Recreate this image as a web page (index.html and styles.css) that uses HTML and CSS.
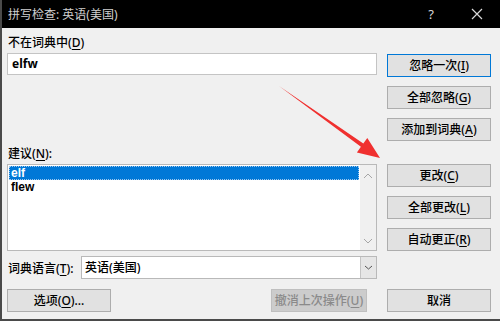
FILE: index.html
```html
<!DOCTYPE html>
<html lang="zh-CN">
<head>
  <meta charset="UTF-8">
  <title>拼写检查</title>
  <link rel="stylesheet" href="styles.css">
</head>
<body>
  <div class="window">
    <div class="titlebar">
      <span class="title">拼写检查: 英语(美国)</span>
      <span class="title-btn help">?</span>
      <span class="title-btn close">
        <svg width="12" height="12" viewBox="0 0 12 12"><path d="M1 1L11 11M11 1L1 11" stroke="#d8d8d8" stroke-width="1.2"/></svg>
      </span>
    </div>

    <div class="dialog">
      <div class="content">
        <div class="left">
          <div class="field-label">不在词典中(<u>D</u>)</div>
          <div class="textbox">elfw</div>

          <div class="field-label suggest-label">建议(<u>N</u>):</div>
          <div class="listbox">
            <div class="items">
              <div class="item selected">elf</div>
              <div class="item">flew</div>
            </div>
            <div class="scrollbar">
              <svg width="10" height="6" viewBox="0 0 10 6"><path d="M1 5L5 1L9 5" fill="none" stroke="#a6a6a6"/></svg>
              <svg width="10" height="6" viewBox="0 0 10 6"><path d="M1 1L5 5L9 1" fill="none" stroke="#a6a6a6"/></svg>
            </div>
          </div>

          <div class="lang-row">
            <span class="lang-label">词典语言(<u>T</u>):</span>
            <div class="select">
              <span class="select-value">英语(美国)</span>
              <span class="select-arrow">
                <svg width="9" height="5" viewBox="0 0 9 5"><path d="M1 1L4.5 4L8 1" fill="none" stroke="#555"/></svg>
              </span>
            </div>
          </div>
        </div>

        <div class="right">
          <button class="btn default">忽略一次(<u>I</u>)</button>
          <button class="btn">全部忽略(<u>G</u>)</button>
          <button class="btn">添加到词典(<u>A</u>)</button>
          <button class="btn group-start">更改(<u>C</u>)</button>
          <button class="btn">全部更改(<u>L</u>)</button>
          <button class="btn">自动更正(<u>R</u>)</button>
        </div>
      </div>

      <div class="footer">
        <button class="btn">选项(<u>O</u>)...</button>
        <button class="btn disabled">撤消上次操作(<u>U</u>)</button>
        <button class="btn">取消</button>
      </div>
    </div>

    <svg class="annotation" width="500" height="321" viewBox="0 0 500 321">
      <polygon points="279,86 363.3,143.6 367.3,137.9 380,158 356.9,152.5 360.9,146.8" fill="#f0302f"/>
    </svg>
  </div>
</body>
</html>
```

FILE: styles.css
```css
* {
  box-sizing: border-box;
  margin: 0;
  padding: 0;
}

body {
  font-family: "Noto Sans", "Noto Sans CJK SC", sans-serif;
  font-size: 12px;
  font-weight: 500;
  color: #000;
  background: #f0f0f0;
}

u {
  text-decoration-thickness: 1px;
  text-underline-offset: 2px;
}

.window {
  position: relative;
  width: 500px;
  height: 321px;
  background: #f0f0f0;
  border-left: 2px solid #4a4a4a;
  border-bottom: 2px solid #4a4a4a;
  overflow: hidden;
}

.titlebar {
  display: flex;
  align-items: center;
  height: 28px;
  margin-left: -2px;
  padding-left: 8px;
  background: #000;
  color: #d0d0d0;
  font-weight: normal;
}

.title {
  flex: 1;
  font-size: 12px;
}

.title-btn {
  display: flex;
  justify-content: center;
  align-items: center;
  width: 46px;
  height: 28px;
  color: #d8d8d8;
}

.help {
  font-size: 13px;
}

.dialog {
  padding: 0 9px 0 5px;
}

.content {
  display: flex;
  gap: 10px;
}

.left {
  width: 370px;
}

.field-label {
  height: 25px;
  padding-top: 6px;
  padding-left: 1px;
  line-height: 17px;
}

.suggest-label {
  margin-top: 64px;
}

.textbox {
  height: 22px;
  padding: 0 4px;
  border: 1px solid #c4c4c4;
  background: #fff;
  font-weight: bold;
  line-height: 20px;
}

.listbox {
  display: flex;
  height: 87px;
  border: 1px solid #b9b9b9;
  background: #fff;
}

.items {
  flex: 1;
  padding: 1px;
}

.item {
  height: 14px;
  padding-left: 2px;
  font-family: "Liberation Sans", sans-serif;
  font-size: 12px;
  font-weight: bold;
  line-height: 14px;
}

.item.selected {
  background: #0078d7;
  color: #fff;
  outline: 1px dotted #9cc7ef;
  outline-offset: -1px;
}

.scrollbar {
  display: flex;
  flex-direction: column;
  justify-content: space-between;
  align-items: center;
  width: 16px;
  padding: 8px 0 6px;
  background: #f0f0f0;
}

.lang-row {
  display: flex;
  align-items: center;
  margin-top: 5px;
  height: 23px;
}

.lang-label {
  width: 74px;
  padding-left: 1px;
}

.select {
  display: flex;
  flex: 1;
  height: 23px;
  border: 1px solid #b9b9b9;
  background: #fff;
}

.select-value {
  flex: 1;
  padding-left: 3px;
  line-height: 21px;
}

.select-arrow {
  display: flex;
  justify-content: center;
  align-items: center;
  width: 16px;
  background: #e6e6e6;
  border-left: 1px solid #c4c4c4;
}

.right {
  display: flex;
  flex-direction: column;
  gap: 9px;
  width: 104px;
  padding-top: 26px;
}

.btn {
  height: 23px;
  border: 1px solid #adadad;
  background: #e1e1e1;
  font-family: inherit;
  font-size: 12px;
  font-weight: 500;
  color: #000;
  line-height: 20px;
}

.btn.default {
  border-color: #0078d7;
}

.btn.group-start {
  margin-top: 14px;
}

.footer {
  display: flex;
  margin-top: 10px;
}

.footer .btn {
  width: 104px;
}

.footer .btn.disabled {
  width: 96px;
  margin-left: auto;
  margin-right: 20px;
  background: #cccccc;
  border-color: #bfbfbf;
  color: #8a8a8a;
}

.annotation {
  position: absolute;
  top: 0;
  left: -2px;
  pointer-events: none;
}
```
